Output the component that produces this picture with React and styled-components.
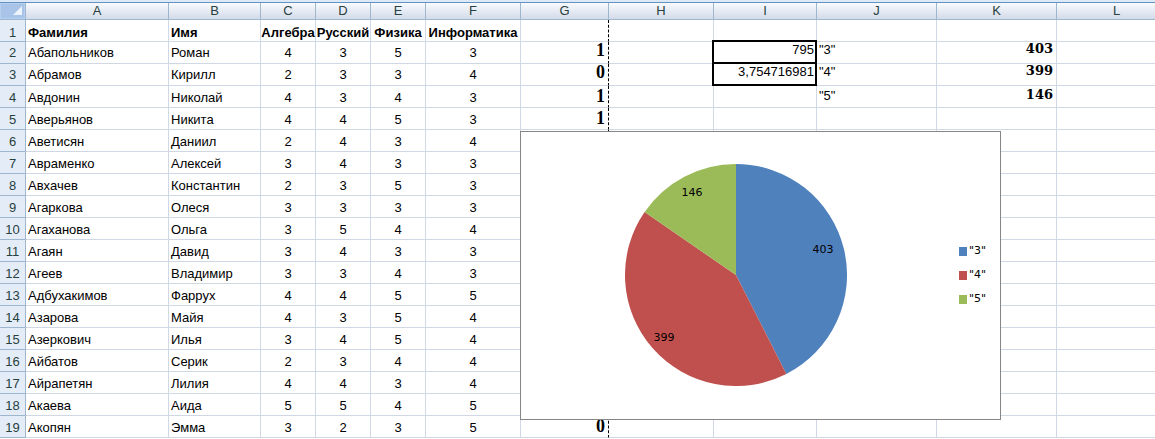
import React from "react";
import styled, { createGlobalStyle } from "styled-components";

const GlobalStyle = createGlobalStyle`
  *, *::before, *::after { box-sizing: border-box; }
  body {
    margin: 0;
    background: #fff;
    color: #000;
    font-family: "Liberation Sans", Arial, sans-serif;
    font-size: 13px;
    overflow: hidden;
  }
`;

const Workbook = styled.main`
  position: relative;
  width: 100%;
  overflow: hidden;
`;

const TopEdge = styled.div`
  height: 3px;
  background: #dbe9f9;
  border-bottom: 1px solid #6593bd;
`;

const Grid = styled.table`
  width: 100%;
  min-width: 1177px;
  table-layout: fixed;
  border-collapse: separate;
  border-spacing: 0;
`;

const Column = styled.col`
  width: ${(p) => (p.$width ? `${p.$width}px` : "auto")};
`;

const ColumnHead = styled.th`
  height: 17px;
  padding: 0;
  font-weight: 400;
  line-height: 16px;
  color: #27413e;
  background: linear-gradient(#f8fafd, #d3dbe9);
  border-right: 1px solid #9eb6ce;
  border-bottom: 1px solid #9eb6ce;
`;

const SelectAll = styled.td`
  padding: 0 3px 2px;
  line-height: 0;
  text-align: right;
  background: #a9c4e9;
  border: 1px solid #9eb6ce;
  border-top: 0;
  border-left: 0;
  box-shadow: inset 0 0 0 1px #b8d0f0;
`;

const RowHead = styled.th`
  height: 22px;
  padding: ${(p) => p.$drop || 0}px 0 0;
  font-weight: 400;
  line-height: 16px;
  color: #27413e;
  background: #e4ecf7;
  border-right: 1px solid #9eb6ce;
  border-bottom: 1px solid #9eb6ce;
`;

const Cell = styled.td`
  height: 22px;
  padding: ${(p) => p.$drop || 0}px 2px 0;
  line-height: 16px;
  white-space: nowrap;
  text-align: ${(p) => p.$align || "left"};
  border-right: 1px solid #d0d7e5;
  border-bottom: 1px solid #d0d7e5;
`;

const TitleCell = styled(Cell)`
  padding: 4px ${(p) => (p.$align ? 0 : 2)}px 0;
  font-weight: 700;
`;

const FlagCell = styled(Cell)`
  padding: 0 3px ${(p) => (p.$drop ? 1 : 5)}px;
  font-family: "Liberation Serif", "Times New Roman", serif;
  font-size: 18px;
  font-weight: 700;
  border-right: 1px dashed #000;
`;

const NoteCell = styled(Cell)`
  vertical-align: top;
`;

const ResultCell = styled(NoteCell)`
  padding: 0 1px;
  border-right: 2px solid #000;
  border-bottom: 2px solid #000;
  box-shadow: -2px -2px 0 0 #000, -2px 0 0 0 #000, 0 -2px 0 0 #000;
`;

const CountCell = styled(NoteCell)`
  padding: ${(p) => p.$drop || 0}px 3px 0;
  font-family: "DejaVu Serif", Cambria, serif;
  font-weight: 700;
  line-height: 14px;
`;

const Chart = styled.figure`
  position: absolute;
  top: 131px;
  left: 520px;
  width: 481px;
  height: 289px;
  margin: 0;
  display: flex;
  align-items: center;
  justify-content: space-between;
  padding: 0 14px 2px 104px;
  background: #fff;
  border: 1px solid #868686;
  font-family: "DejaVu Sans", Verdana, sans-serif;
  font-size: 11px;
`;

const Pie = styled.svg`
  display: block;
  width: 222px;
  height: 222px;
`;

const Legend = styled.ul`
  display: flex;
  flex-direction: column;
  gap: 8px;
  margin: 0;
  padding: 0;
  list-style: none;
`;

const LegendItem = styled.li`
  display: flex;
  align-items: center;
  gap: 2px;
  line-height: 16px;
`;

const Swatch = styled.span`
  width: 8px;
  height: 9px;
  margin-top: 2px;
  background: ${(p) => p.$color};
`;

const columns = [
  ["A", 143], ["B", 92], ["C", 55], ["D", 55], ["E", 55], ["F", 95],
  ["G", 88], ["H", 105], ["I", 103], ["J", 120], ["K", 120], ["L", 0],
];

const students = [
  ["Абапольников", "Роман", 4, 3, 5, 3, 1],
  ["Абрамов", "Кирилл", 2, 3, 3, 4, 0],
  ["Авдонин", "Николай", 4, 3, 4, 3, 1],
  ["Аверьянов", "Никита", 4, 4, 5, 3, 1],
  ["Аветисян", "Даниил", 2, 4, 3, 4],
  ["Авраменко", "Алексей", 3, 4, 3, 3],
  ["Авхачев", "Константин", 2, 3, 5, 3],
  ["Агаркова", "Олеся", 3, 3, 3, 3],
  ["Агаханова", "Ольга", 3, 5, 4, 4],
  ["Агаян", "Давид", 3, 4, 3, 3],
  ["Агеев", "Владимир", 3, 3, 4, 3],
  ["Адбухакимов", "Фаррух", 4, 4, 5, 5],
  ["Азарова", "Майя", 4, 3, 5, 4],
  ["Азеркович", "Илья", 3, 4, 5, 4],
  ["Айбатов", "Серик", 2, 3, 4, 4],
  ["Айрапетян", "Лилия", 4, 4, 3, 4],
  ["Акаева", "Аида", 5, 5, 4, 5],
  ["Акопян", "Эмма", 3, 2, 3, 5, 0],
];

const results = ["795", "3,754716981"];

const grades = [
  { label: '"3"', count: 403, color: "#4f81bd", x: 198, y: 89 },
  { label: '"4"', count: 399, color: "#c0504d", x: 39, y: 177 },
  { label: '"5"', count: 146, color: "#9bbb59", x: 67, y: 32 },
];

const RADIUS = 111;

function slicePaths(items) {
  const total = items.reduce((sum, item) => sum + item.count, 0);
  const point = (value) => {
    const angle = (value / total) * 2 * Math.PI;
    return `${RADIUS + RADIUS * Math.sin(angle)} ${RADIUS - RADIUS * Math.cos(angle)}`;
  };
  let start = 0;
  return items.map((item) => {
    const end = start + item.count;
    const d = `M${RADIUS} ${RADIUS} L${point(start)} A${RADIUS} ${RADIUS} 0 0 1 ${point(end)} Z`;
    start = end;
    return d;
  });
}

function GradeChart() {
  const paths = slicePaths(grades);
  return (
    <Chart>
      <Pie viewBox="0 0 222 222" role="img" aria-label="403, 399, 146">
        {grades.map((g, i) => <path key={g.label} d={paths[i]} fill={g.color} />)}
        {grades.map((g) => (
          <text key={g.label} x={g.x} y={g.y} textAnchor="middle">{g.count}</text>
        ))}
      </Pie>
      <Legend>
        {grades.map((g) => (
          <LegendItem key={g.label}><Swatch $color={g.color} />{g.label}</LegendItem>
        ))}
      </Legend>
    </Chart>
  );
}

function StudentRow({ student, index }) {
  const [surname, name, algebra, russian, physics, informatics, flag] = student;
  const grade = grades[index];
  const hasResult = index < results.length;
  const Result = hasResult ? ResultCell : Cell;
  const drop = hasResult ? 0 : 2;
  return (
    <tr>
      <RowHead scope="row" $drop={drop}>{index + 2}</RowHead>
      <Cell $drop={drop}>{surname}</Cell>
      <Cell $drop={drop}>{name}</Cell>
      <Cell $drop={drop} $align="center">{algebra}</Cell>
      <Cell $drop={drop} $align="center">{russian}</Cell>
      <Cell $drop={drop} $align="center">{physics}</Cell>
      <Cell $drop={drop} $align="center">{informatics}</Cell>
      <FlagCell $drop={drop} $align="right">{flag}</FlagCell>
      <Cell />
      <Result $align="right">{results[index]}</Result>
      <NoteCell $drop={drop}>{grade?.label}</NoteCell>
      <CountCell $drop={drop} $align="right">{grade?.count}</CountCell>
      <Cell />
    </tr>
  );
}

export default function App() {
  return (
    <Workbook>
      <GlobalStyle />
      <TopEdge />
      <Grid>
        <colgroup>
          <Column $width={26} />
          {columns.map(([letter, width]) => <Column key={letter} $width={width} />)}
        </colgroup>
        <thead>
          <tr>
            <SelectAll>
              <svg width="9" height="9" viewBox="0 0 9 9" aria-hidden="true">
                <path d="M9 0V9H0Z" fill="#eef4fc" />
              </svg>
            </SelectAll>
            {columns.map(([letter]) => <ColumnHead key={letter} scope="col">{letter}</ColumnHead>)}
          </tr>
        </thead>
        <tbody>
          <tr>
            <RowHead scope="row" $drop={4}>1</RowHead>
            <TitleCell>Фамилия</TitleCell>
            <TitleCell>Имя</TitleCell>
            <TitleCell $align="center">Алгебра</TitleCell>
            <TitleCell $align="center">Русский</TitleCell>
            <TitleCell $align="center">Физика</TitleCell>
            <TitleCell $align="center">Информатика</TitleCell>
            <FlagCell />
            <Cell />
            <Cell />
            <Cell />
            <Cell />
            <Cell />
          </tr>
          {students.map((student, i) => (
            <StudentRow key={student[0]} student={student} index={i} />
          ))}
        </tbody>
      </Grid>
      <GradeChart />
    </Workbook>
  );
}
